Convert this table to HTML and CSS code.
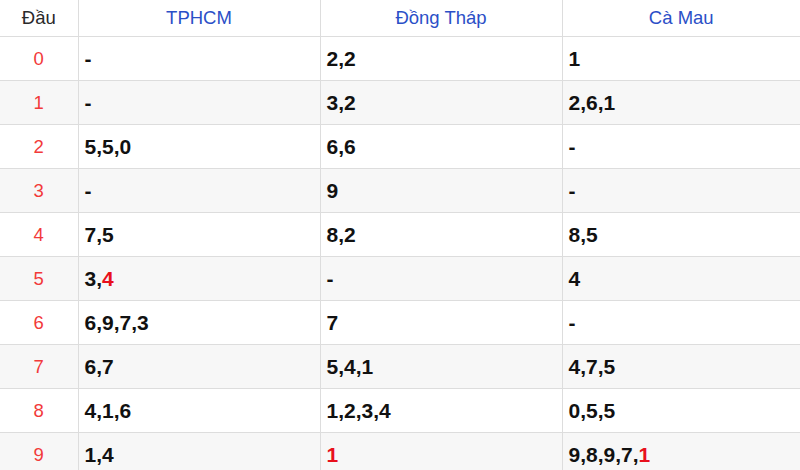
FILE: index.html
```html
<!DOCTYPE html>
<html lang="vi">
<head>
<meta charset="utf-8">
<title>Lô tô đầu</title>
<link rel="stylesheet" href="styles.css">
</head>
<body>
<table class="loto">
  <colgroup>
    <col class="c-head">
    <col class="c-prov">
    <col class="c-prov">
    <col class="c-last">
  </colgroup>
  <thead>
    <tr>
      <th class="dau-h">Đầu</th>
      <th>TPHCM</th>
      <th>Đồng Tháp</th>
      <th>Cà Mau</th>
    </tr>
  </thead>
  <tbody>
    <tr><td class="dau">0</td><td>-</td><td>2,2</td><td>1</td></tr>
    <tr><td class="dau">1</td><td>-</td><td>3,2</td><td>2,6,1</td></tr>
    <tr><td class="dau">2</td><td>5,5,0</td><td>6,6</td><td>-</td></tr>
    <tr><td class="dau">3</td><td>-</td><td>9</td><td>-</td></tr>
    <tr><td class="dau">4</td><td>7,5</td><td>8,2</td><td>8,5</td></tr>
    <tr><td class="dau">5</td><td>3,<span class="hot">4</span></td><td>-</td><td>4</td></tr>
    <tr><td class="dau">6</td><td>6,9,7,3</td><td>7</td><td>-</td></tr>
    <tr><td class="dau">7</td><td>6,7</td><td>5,4,1</td><td>4,7,5</td></tr>
    <tr><td class="dau">8</td><td>4,1,6</td><td>1,2,3,4</td><td>0,5,5</td></tr>
    <tr><td class="dau">9</td><td>1,4</td><td><span class="hot">1</span></td><td>9,8,9,7,<span class="hot">1</span></td></tr>
  </tbody>
</table>
</body>
</html>
```

FILE: styles.css
```css
html, body {
  margin: 0;
  padding: 0;
  background: #ffffff;
}

body {
  font-family: "Liberation Sans", Arial, sans-serif;
  width: 800px;
  overflow: hidden;
}

.loto {
  width: 800px;
  border-collapse: collapse;
  table-layout: fixed;
}

.c-head { width: 78px; }
.c-prov { width: 242px; }
.c-last { width: 238px; }

.loto th,
.loto td {
  border-right: 1px solid #dddddd;
  border-bottom: 1px solid #dddddd;
  padding: 0;
}

.loto th:last-child,
.loto td:last-child {
  border-right: none;
}

.loto th {
  height: 36px;
  font-size: 18.5px;
  font-weight: normal;
  color: #2b4fc7;
  text-align: center;
  vertical-align: middle;
}

.loto th.dau-h {
  color: #2a2a2a;
}

.loto td {
  height: 43px;
  font-size: 21px;
  font-weight: bold;
  color: #111111;
  padding-left: 6px;
  vertical-align: middle;
}

.loto td.dau {
  padding-left: 0;
  text-align: center;
  font-size: 18.5px;
  font-weight: normal;
  color: #f23a3a;
}

.loto tbody tr:nth-child(even) td {
  background: #f7f7f7;
}

.hot {
  color: #e8101c;
}
```
